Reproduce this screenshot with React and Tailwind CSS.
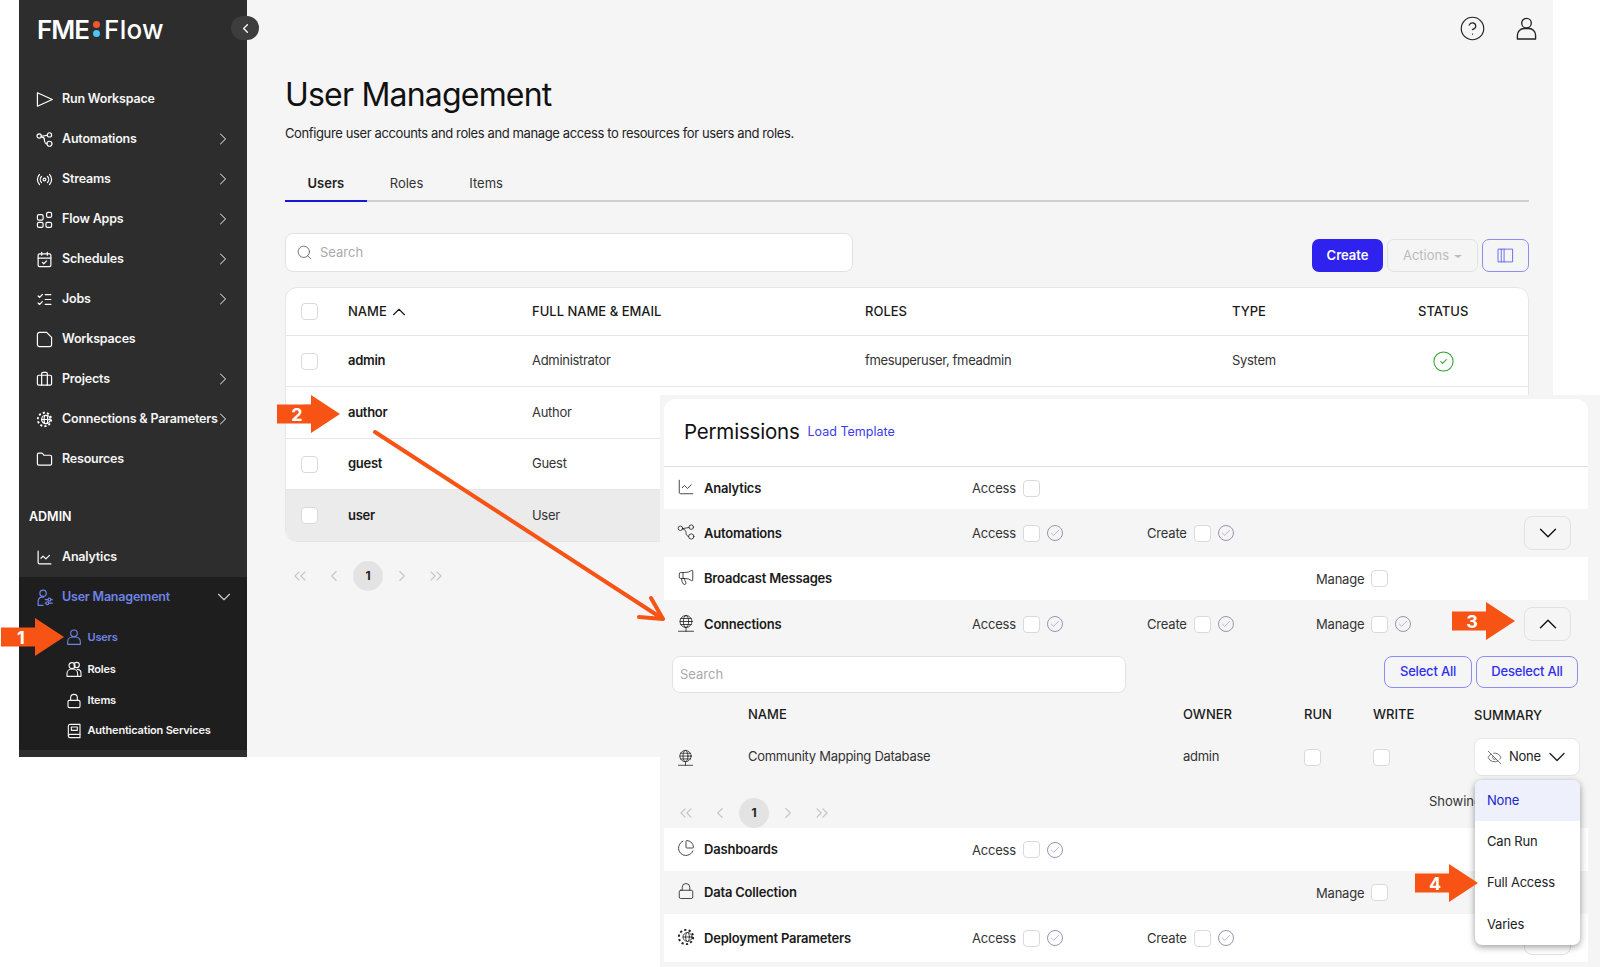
import {
  Briefcase,
  CalendarCheck,
  ChartLine,
  ChartPie,
  Check,
  ChevronDown,
  ChevronLeft,
  ChevronRight,
  ChevronUp,
  ChevronsLeft,
  ChevronsRight,
  CircleCheck,
  CircleHelp,
  EyeOff,
  Folder,
  ListChecks,
  Lock,
  Megaphone,
  Radio,
  Search,
} from "lucide-react";

function Svg({ className = "", children, size = 16, sw = 1.5 }) {
  return (
    <svg viewBox="0 0 24 24" width={size} height={size} fill="none" stroke="currentColor" strokeWidth={sw} strokeLinecap="round" strokeLinejoin="round" className={className}>
      {children}
    </svg>
  );
}

const RunIcon = (p) => (
  <Svg {...p}>
    <path d="M2 2.500 23 12 2 21.500Z" />
  </Svg>
);
const AutomationIcon = (p) => (
  <Svg {...p}>
    <circle cx="4.500" cy="7" r="3" />
    <circle cx="19" cy="5.500" r="3" />
    <circle cx="19" cy="18" r="3.500" />
    <path d="M7.500 7.500 16 6M7.500 8c3 .5 4.500 2 4.500 5s2 5 3.500 5" />
  </Svg>
);
const AppsIcon = (p) => (
  <Svg {...p}>
    <rect x="2" y="5" width="8" height="8" rx="2" />
    <rect x="15" y="2" width="7" height="7" rx="2" />
    <rect x="2" y="16" width="8" height="7" rx="2" />
    <rect x="14" y="16" width="8" height="7" rx="2" />
  </Svg>
);
const FileIcon = (p) => (
  <Svg {...p}>
    <path d="M5 2h10l7 7v10a3 3 0 0 1-3 3H5a3 3 0 0 1-3-3V5a3 3 0 0 1 3-3Z" />
  </Svg>
);
const GearGlobeIcon = (p) => (
  <Svg {...p}>
    <circle cx="12" cy="12" r="9.500" strokeWidth="2.600" strokeDasharray="3 3" strokeLinecap="butt" />
    <circle cx="14" cy="12" r="6" />
    <ellipse cx="14" cy="12" rx="2.600" ry="6" />
    <path d="M8 12h12" />
  </Svg>
);
const GlobeStandIcon = (p) => (
  <Svg {...p}>
    <circle cx="12" cy="10" r="8" />
    <ellipse cx="12" cy="10" rx="3.500" ry="8" />
    <path d="M4 10h16M5 6h14M5 14h14M12 18v5M2 23h20" />
  </Svg>
);
const UserIcon = (p) => (
  <Svg {...p}>
    <circle cx="12" cy="6.500" r="5" />
    <path d="M2.500 23v-4a7 7 0 0 1 7-7h5a7 7 0 0 1 7 7v4Z" />
  </Svg>
);
const RolesIcon = (p) => (
  <Svg {...p}>
    <circle cx="9" cy="7" r="4.500" />
    <circle cx="16" cy="6" r="4" />
    <path d="M1.500 23v-4a7 7 0 0 1 7-7h2a7 7 0 0 1 7 7v4Z" />
    <path d="M17 12.500c3.500 0 5.500 3 5.500 6v4.500h-5" />
  </Svg>
);
const UserAdminIcon = (p) => (
  <Svg {...p}>
    <circle cx="10" cy="6" r="4.500" />
    <path d="M3 23v-5c0-4 2.500-6.500 6-6.500h2M3 23h7" />
    <path d="M13 15h10M13 20h10" />
    <circle cx="19" cy="15" r="2" fill="#1e1e1e" />
    <circle cx="16" cy="20" r="2" fill="#1e1e1e" />
  </Svg>
);
const BookIcon = (p) => (
  <Svg {...p}>
    <path d="M6 2h15v20H6a2.500 2.500 0 0 1-2.500-2.500v-15A2.500 2.500 0 0 1 6 2Z" />
    <path d="M3.500 18.500A2.500 2.500 0 0 1 6 17h15M8 6h9v5H8Z" />
  </Svg>
);

const NAV = [
  { label: "Run Workspace", Icon: RunIcon },
  { label: "Automations", Icon: AutomationIcon, more: true },
  { label: "Streams", Icon: Radio, more: true },
  { label: "Flow Apps", Icon: AppsIcon, more: true },
  { label: "Schedules", Icon: CalendarCheck, more: true },
  { label: "Jobs", Icon: ListChecks, more: true },
  { label: "Workspaces", Icon: FileIcon },
  { label: "Projects", Icon: Briefcase, more: true },
  { label: "Connections & Parameters", Icon: GearGlobeIcon, more: true },
  { label: "Resources", Icon: Folder },
];

const SUB = [
  { label: "Users", Icon: UserIcon, h: "h-[32px]", active: true },
  { label: "Roles", Icon: RolesIcon, h: "h-[32px]" },
  { label: "Items", Icon: Lock, h: "h-[31px]" },
  { label: "Authentication Services", Icon: BookIcon, h: "h-[29px]" },
];

function NavRow({ label, Icon, more }) {
  return (
    <div className="flex h-[40px] items-center pl-[17px]">
      <Icon size={17} strokeWidth={1.7} sw={1.7} className="shrink-0" />
      <span className="ml-[9px] whitespace-nowrap text-[12.5px] font-semibold tracking-[-0.2px] text-[#f5f5f5]">{label}</span>
      {more && <ChevronRight size={20} strokeWidth={1.25} className="absolute left-[194px] text-[#cfcfcf]" />}
    </div>
  );
}

function Sidebar() {
  return (
    <aside className="relative z-10 flex w-[228px] shrink-0 flex-col bg-[#2d2d2d] text-white">
      <div className="flex h-[79px] items-start pl-[18px] pt-[13px] text-[26px] leading-[34px] text-white">
        <span className="font-semibold tracking-[-1px]">FME</span>
        <span className="mx-[4px] mt-[8px] flex flex-col gap-[2px]">
          <span className="h-[7px] w-[7px] rounded-full bg-[#f0582a]" />
          <span className="h-[7px] w-[7px] rounded-full bg-[#4cc4f4]" />
        </span>
        <span className="font-medium tracking-[0.3px]">Flow</span>
      </div>
      {NAV.map((item) => (
        <NavRow key={item.label} {...item} />
      ))}
      <div className="mt-[29px] h-[18px] pl-[10px] text-[12.5px] font-semibold leading-[18px]">ADMIN</div>
      <div className="mt-[11px]">
        <NavRow label="Analytics" Icon={ChartLine} />
      </div>
      <div className="bg-[#1e1e1e] pb-[5px]">
        <div className="flex h-[40px] items-center pl-[17px] text-[#6f83e6]">
          <UserAdminIcon size={17} sw={1.7} />
          <span className="ml-[9px] text-[12.5px] font-semibold tracking-[-0.2px]">User Management</span>
          <ChevronDown size={22} strokeWidth={1.25} className="absolute left-[194px] text-[#cfcfcf]" />
        </div>
        <div className="pt-[4px]">
          {SUB.map(({ label, Icon, h, active }) => (
            <div key={label} className={`flex items-center pl-[47px] ${h} ${active ? "text-[#6f83e6]" : "text-[#f5f5f5]"}`}>
              <Icon size={16} strokeWidth={1.7} sw={1.7} className="shrink-0" />
              <span className="ml-[5.5px] whitespace-nowrap text-[11px] font-semibold tracking-[-0.2px]">{label}</span>
            </div>
          ))}
        </div>
      </div>
      <div className="flex-1" />
      <button className="absolute left-[212px] top-[16px] flex h-[24px] w-[28px] items-center justify-center rounded-full bg-[#3d3d3d] text-white">
        <ChevronLeft size={15} strokeWidth={2} />
      </button>
    </aside>
  );
}

function Box({ className = "" }) {
  return <span className={`block h-[17px] w-[17px] shrink-0 rounded-[4px] border border-[#d9d9d9] bg-white ${className}`} />;
}

function Pagination({ className = "" }) {
  return (
    <div className={`flex items-center text-[#c6c6c6] ${className}`}>
      <span className="flex w-[34px] justify-center">
        <ChevronsLeft size={20} strokeWidth={1.5} />
      </span>
      <span className="flex w-[34px] justify-center">
        <ChevronLeft size={18} strokeWidth={1.5} />
      </span>
      <span className="mx-[2px] flex h-[30px] w-[30px] items-center justify-center rounded-full bg-[#e3e3e3] text-[12px] font-bold text-[#222]">1</span>
      <span className="flex w-[34px] justify-center">
        <ChevronRight size={18} strokeWidth={1.5} />
      </span>
      <span className="flex w-[34px] justify-center">
        <ChevronsRight size={20} strokeWidth={1.5} />
      </span>
    </div>
  );
}

const USERS = [
  { name: "admin", full: "Administrator", roles: "fmesuperuser, fmeadmin", type: "System", ok: true, h: "h-[51px]" },
  { name: "author", full: "Author", h: "h-[52px]" },
  { name: "guest", full: "Guest", h: "h-[51px]" },
  { name: "user", full: "User", h: "h-[52px]", bg: "bg-[#ebebeb]" },
];

function UsersTable() {
  return (
    <div className="mt-[15px] overflow-hidden rounded-[12px] border border-[#e6e6e6] bg-white text-[13px] text-[#1a1a1a]">
      <div className="flex h-[47px] items-center font-medium">
        <span className="flex w-[62px] pl-[15px]">
          <Box />
        </span>
        <span className="flex w-[184px] items-center gap-[1px]">
          NAME <ChevronUp size={22} strokeWidth={1.25} />
        </span>
        <span className="w-[333px]">FULL NAME &amp; EMAIL</span>
        <span className="w-[367px]">ROLES</span>
        <span className="w-[186px]">TYPE</span>
        <span className="w-[50px] whitespace-nowrap text-center">STATUS</span>
      </div>
      {USERS.map((u) => (
        <div key={u.name} className={`flex items-center border-t border-[#e6e6e6] ${u.h} ${u.bg || ""}`}>
          <span className="flex w-[62px] pl-[15px]">
            <Box />
          </span>
          <span className="w-[184px] font-semibold tracking-[-0.3px]">{u.name}</span>
          <span className="w-[333px] tracking-[-0.3px] text-[#333]">{u.full}</span>
          <span className="w-[367px] tracking-[-0.34px] text-[#333]">{u.roles}</span>
          <span className="w-[186px] tracking-[-0.3px] text-[#333]">{u.type}</span>
          <span className="flex w-[50px] justify-center">{u.ok && <CircleCheck size={23} strokeWidth={1.1} className="text-[#2fa32f]" />}</span>
        </div>
      ))}
    </div>
  );
}

function Main() {
  return (
    <main className="relative flex-1 bg-[#f5f5f5] pl-[38px] pr-[24px]">
      <div className="-mr-[9px] flex h-[56px] items-center justify-end gap-[29px] text-[#222]">
        <CircleHelp size={27} strokeWidth={1.05} />
        <UserIcon size={23} sw={1.4} />
      </div>
      <h1 className="mt-[19px] h-[40px] text-[32px] font-normal leading-[40px] tracking-[-0.8px] text-[#111]">User Management</h1>
      <p className="mt-[9px] h-[18px] text-[13px] leading-[18px] tracking-[-0.38px] text-[#222]">Configure user accounts and roles and manage access to resources for users and roles.</p>
      <div className="mt-[23px] flex h-[37px] border-b-2 border-[#cfcfcf] text-[13px]">
        <span className="-mb-[2px] h-[37px] border-b-2 border-[#1717d8] px-[22.5px] pt-[9px] font-semibold text-[#222]">Users</span>
        <span className="px-[23px] pt-[9px] text-[#333]">Roles</span>
        <span className="px-[23px] pt-[9px] text-[#333]">Items</span>
      </div>
      <div className="mt-[31px] flex items-end justify-between">
        <div className="flex h-[39px] w-[568px] items-center rounded-[8px] border border-[#e2e2e2] bg-white pl-[10px] text-[13px] text-[#aaaaaa]">
          <Search size={17} strokeWidth={1.25} className="text-[#666]" />
          <span className="ml-[7px]">Search</span>
        </div>
        <div className="flex h-[33px] gap-[4px] text-[13px]">
          <button className="w-[71px] rounded-[7px] bg-[#2f22ee] font-semibold text-white">Create</button>
          <button className="flex w-[91px] items-center justify-center gap-[5px] rounded-[7px] border border-[#e2e2e2] text-[#bbbbbb]">
            Actions
            <span className="mt-[1px] h-0 w-0 border-x-[4px] border-t-[3px] border-x-transparent border-t-[#bbbbbb]" />
          </button>
          <button className="flex w-[47px] items-center justify-center rounded-[7px] border border-[#8c8cf3] text-[#4a4af0]">
            <Svg size={17} sw={1.1}>
              <rect x="2" y="3" width="20" height="18" />
              <path d="M6 3v18M10 3v18" />
            </Svg>
          </button>
        </div>
      </div>
      <UsersTable />
      <Pagination className="-ml-[2px] mt-[19px]" />
    </main>
  );
}

const CheckDot = () => <Check size={16} strokeWidth={1.1} className="shrink-0 rounded-full border border-[#a090b4] p-[1.5px] text-[#85749e]" />;

function Perm({ label, w, dot }) {
  return (
    <div className="flex items-center">
      <span className={`${w} mt-[2px] text-[13px] tracking-[-0.2px] text-[#333]`}>{label}</span>
      <Box />
      {dot && (
        <span className="ml-[7px]">
          <CheckDot />
        </span>
      )}
    </div>
  );
}

function ChevronButton({ up }) {
  const Icon = up ? ChevronUp : ChevronDown;
  return (
    <span className="ml-auto mr-[17px] flex h-[34px] w-[47px] items-center justify-center rounded-[8px] border border-[#e2e2e2] text-[#111]">
      <Icon size={30} strokeWidth={1.1} />
    </span>
  );
}

function PermRow({ Icon, label, h, bg, access, create, manage, button, up }) {
  return (
    <div className={`grid grid-cols-[308px_175px_169px_1fr] items-center ${h} ${bg}`}>
      <div className="flex items-center pl-[13px] text-[#222]">
        <Icon size={18} strokeWidth={1.1} sw={1.1} className="-mt-[3px] shrink-0" />
        <span className="ml-[9px] mt-[1px] text-[13px] font-semibold tracking-[-0.2px] text-[#1a1a1a]">{label}</span>
      </div>
      <div>{access && <Perm label="Access" w="w-[51px]" dot={access === "dot"} />}</div>
      <div>{create && <Perm label="Create" w="w-[47px]" dot />}</div>
      <div className="flex items-center">
        {manage && <Perm label="Manage" w="w-[55px]" dot={manage === "dot"} />}
        {button && <ChevronButton up={up} />}
      </div>
    </div>
  );
}

function ExpandedConnections() {
  return (
    <div className="bg-[#f5f5f5]">
      <div className="flex items-start justify-between pl-[8px] pr-[10px] pt-[8px] text-[13px]">
        <div className="flex h-[37px] w-[454px] items-center rounded-[8px] border border-[#e2e2e2] bg-white pl-[7px] text-[#aaaaaa]">Search</div>
        <div className="flex gap-[4px] font-medium tracking-[-0.2px] text-[#2f2ff0]">
          <span className="flex h-[32px] w-[88px] items-center justify-center rounded-[8px] border border-[#8c8cf3]">Select All</span>
          <span className="flex h-[32px] w-[102px] items-center justify-center rounded-[8px] border border-[#8c8cf3]">Deselect All</span>
        </div>
      </div>
      <div className="relative mt-[8px] grid h-[27px] grid-cols-[84px_435px_121px_69px_1fr] items-center text-[13px] font-medium text-[#1a1a1a]">
        <span />
        <span>NAME</span>
        <span>OWNER</span>
        <span>RUN</span>
        <span>WRITE</span>
        <span className="absolute left-[810px] top-[5px]">SUMMARY</span>
      </div>
      <div className="relative mt-[10px] grid h-[38px] grid-cols-[84px_435px_121px_69px_1fr] items-center text-[13px] tracking-[-0.28px] text-[#333]">
        <span className="pl-[13px] text-[#222]">
          <GlobeStandIcon size={17} sw={1.1} />
        </span>
        <span>Community Mapping Database</span>
        <span>admin</span>
        <span>
          <Box className="bg-transparent" />
        </span>
        <span>
          <Box className="bg-transparent" />
        </span>
        <span className="absolute left-[810px] top-0 flex h-[38px] w-[106px] items-center rounded-[8px] border border-[#e6e6e6] bg-white pl-[12px] text-[#222]">
          <EyeOff size={15} strokeWidth={1} />
          <span className="ml-[7px]">None</span>
          <ChevronDown size={28} strokeWidth={1.2} className="ml-[2px]" />
        </span>
      </div>
      <div className="flex h-[52px] pt-[22px]">
        <Pagination className="ml-[5px] h-[30px]" />
        <span className="ml-auto mr-[106px] -mt-[6px] h-[18px] text-[13px] leading-[18px] text-[#333]">Showing</span>
      </div>
    </div>
  );
}

function PermissionsPanel() {
  return (
    <div className="absolute left-[660px] top-[395px] h-[572px] w-[940px] bg-[#f5f5f5] pl-[4px] pt-[4px]">
      <div className="w-[924px] overflow-hidden rounded-t-[12px] bg-white">
        <div className="flex h-[68px] items-center gap-[8px] border-b border-[#e2e2e2] pb-[1px] pl-[20px]">
          <h2 className="text-[20.5px] font-normal tracking-[-0.2px] text-[#111]">Permissions</h2>
          <span className="text-[12.5px] text-[#3b3bea]">Load Template</span>
        </div>
        <PermRow Icon={ChartLine} label="Analytics" h="h-[42px]" bg="bg-white" access="box" />
        <PermRow Icon={AutomationIcon} label="Automations" h="h-[48px]" bg="bg-[#f5f5f5]" access="dot" create button />
        <PermRow Icon={Megaphone} label="Broadcast Messages" h="h-[43px]" bg="bg-white" manage="box" />
        <PermRow Icon={GlobeStandIcon} label="Connections" h="h-[48px]" bg="bg-[#f5f5f5]" access="dot" create manage="dot" button up />
        <ExpandedConnections />
        <PermRow Icon={ChartPie} label="Dashboards" h="h-[43px]" bg="bg-white" access="dot" />
        <PermRow Icon={Lock} label="Data Collection" h="h-[43px]" bg="bg-[#f5f5f5]" manage="box" />
        <PermRow Icon={GearGlobeIcon} label="Deployment Parameters" h="h-[48px]" bg="bg-white" access="dot" create button />
      </div>
      <div className="absolute left-[815px] top-[385px] w-[105px] overflow-hidden rounded-[7px] bg-white text-[13px] tracking-[-0.2px] text-[#222] shadow-[0_2px_7px_rgba(0,0,0,0.4)]">
        <div className="flex h-[41px] items-center bg-[#eef0fc] pl-[12px] text-[#2222cc]">None</div>
        <div className="flex h-[41px] items-center pl-[12px]">Can Run</div>
        <div className="flex h-[41.5px] items-center pl-[12px]">Full Access</div>
        <div className="flex h-[41.5px] items-center pl-[12px]">Varies</div>
      </div>
    </div>
  );
}

function Callout({ n, className }) {
  return (
    <div className={`absolute h-[38px] w-[63px] ${className}`}>
      <svg viewBox="0 0 63 38" width="63" height="38" className="absolute left-0 top-0">
        <path d="M0 9.500H34V0L63 19 34 38V28.500H0Z" fill="#f65314" />
      </svg>
      <span className="absolute left-[10px] top-[8px] w-[20px] text-center text-[18px] font-bold leading-[24px] text-white">{n}</span>
    </div>
  );
}

export default function App() {
  return (
    <div className="relative h-[967px] w-[1600px] overflow-hidden bg-white font-['Inter',sans-serif]">
      <div className="ml-[19px] flex h-[757px] w-[1534px]">
        <Sidebar />
        <Main />
      </div>
      <PermissionsPanel />
      <svg viewBox="0 0 1600 967" width="1600" height="967" className="pointer-events-none absolute left-0 top-0" fill="none" stroke="#f65314" strokeWidth="4" strokeLinecap="round" strokeLinejoin="round">
        <path d="M375 432 663 619M651 598l12 21-24-2" />
      </svg>
      <Callout n="1" className="left-[1px] top-[618px] z-20" />
      <Callout n="2" className="left-[277px] top-[395px]" />
      <Callout n="3" className="left-[1452px] top-[602px]" />
      <Callout n="4" className="left-[1415px] top-[864px]" />
    </div>
  );
}
